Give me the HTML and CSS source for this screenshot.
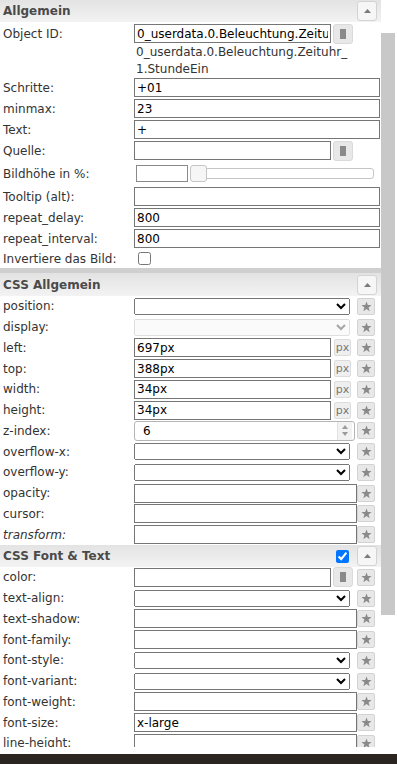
FILE: index.html
```html
<!DOCTYPE html>
<html>
<head>
<meta charset="utf-8">
<link rel="stylesheet" href="styles.css">
</head>
<body>
<div class="screen">
  <div class="viewport">
    <div class="panel">
      <section class="group">
        <div class="ghead"><span class="gtitle">Allgemein</span><button class="collapse"><svg width="7" height="4" viewBox="0 0 7 4"><polygon points="0,4 3.5,0 7,4" fill="#7a7a7a"/></svg></button></div>
        <div class="row first"><span class="lbl">Object ID:</span><div class="val"><input class="txt w197" value="0_userdata.0.Beleuchtung.Zeituhr_1.StundeEin"><button class="browse"><i></i></button></div></div>
        <div class="info">0_userdata.0.Beleuchtung.Zeituhr_<br>1.StundeEin</div>
        <div class="row"><span class="lbl">Schritte:</span><div class="val"><input class="txt" value="+01"></div></div>
        <div class="row"><span class="lbl">minmax:</span><div class="val"><input class="txt" value="23"></div></div>
        <div class="row"><span class="lbl">Text:</span><div class="val"><input class="txt" value="+"></div></div>
        <div class="row"><span class="lbl">Quelle:</span><div class="val"><input class="txt w197" value=""><button class="browse"><i></i></button></div></div>
        <div class="row tall"><span class="lbl">Bildhöhe in %:</span><div class="val"><input class="txt small" value=""><div class="slider"><span class="handle"></span></div></div></div>
        <div class="row"><span class="lbl">Tooltip (alt):</span><div class="val"><input class="txt" value=""></div></div>
        <div class="row"><span class="lbl">repeat_delay:</span><div class="val"><input class="txt" value="800"></div></div>
        <div class="row"><span class="lbl">repeat_interval:</span><div class="val"><input class="txt" value="800"></div></div>
        <div class="row chk"><span class="lbl">Invertiere das Bild:</span><div class="val"><input type="checkbox" class="cb"></div></div>
      </section>
      <div class="band"></div>
      <section class="group css">
        <div class="ghead"><span class="gtitle">CSS Allgemein</span><button class="collapse"><svg width="7" height="4" viewBox="0 0 7 4"><polygon points="0,4 3.5,0 7,4" fill="#7a7a7a"/></svg></button></div>
        <div class="row"><span class="lbl">position:</span><div class="val"><select class="sel"><option></option></select></div><button class="star"><svg width="11" height="11" viewBox="0 0 10 10"><path d="M5 0.4 6.2 3.6 9.6 3.7 6.9 5.9 7.9 9.3 5 7.3 2.1 9.3 3.1 5.9 0.4 3.7 3.8 3.6Z" fill="#8a8a8a"/></svg></button></div>
        <div class="row"><span class="lbl">display:</span><div class="val"><select class="sel" disabled><option></option></select></div><button class="star"><svg width="11" height="11" viewBox="0 0 10 10"><path d="M5 0.4 6.2 3.6 9.6 3.7 6.9 5.9 7.9 9.3 5 7.3 2.1 9.3 3.1 5.9 0.4 3.7 3.8 3.6Z" fill="#8a8a8a"/></svg></button></div>
        <div class="row"><span class="lbl">left:</span><div class="val"><input class="txt w197" value="697px"><span class="px">px</span></div><button class="star"><svg width="11" height="11" viewBox="0 0 10 10"><path d="M5 0.4 6.2 3.6 9.6 3.7 6.9 5.9 7.9 9.3 5 7.3 2.1 9.3 3.1 5.9 0.4 3.7 3.8 3.6Z" fill="#8a8a8a"/></svg></button></div>
        <div class="row"><span class="lbl">top:</span><div class="val"><input class="txt w197" value="388px"><span class="px">px</span></div><button class="star"><svg width="11" height="11" viewBox="0 0 10 10"><path d="M5 0.4 6.2 3.6 9.6 3.7 6.9 5.9 7.9 9.3 5 7.3 2.1 9.3 3.1 5.9 0.4 3.7 3.8 3.6Z" fill="#8a8a8a"/></svg></button></div>
        <div class="row"><span class="lbl">width:</span><div class="val"><input class="txt w197" value="34px"><span class="px">px</span></div><button class="star"><svg width="11" height="11" viewBox="0 0 10 10"><path d="M5 0.4 6.2 3.6 9.6 3.7 6.9 5.9 7.9 9.3 5 7.3 2.1 9.3 3.1 5.9 0.4 3.7 3.8 3.6Z" fill="#8a8a8a"/></svg></button></div>
        <div class="row"><span class="lbl">height:</span><div class="val"><input class="txt w197" value="34px"><span class="px">px</span></div><button class="star"><svg width="11" height="11" viewBox="0 0 10 10"><path d="M5 0.4 6.2 3.6 9.6 3.7 6.9 5.9 7.9 9.3 5 7.3 2.1 9.3 3.1 5.9 0.4 3.7 3.8 3.6Z" fill="#8a8a8a"/></svg></button></div>
        <div class="row"><span class="lbl">z-index:</span><div class="val"><span class="spinner"><input class="spin-in" value="6"><span class="arrows"><svg width="6" height="4" viewBox="0 0 6 4"><polygon points="0,4 3,0 6,4" fill="#9a9a9a"/></svg><svg width="6" height="4" viewBox="0 0 6 4"><polygon points="0,0 3,4 6,0" fill="#9a9a9a"/></svg></span></span></div><button class="star"><svg width="11" height="11" viewBox="0 0 10 10"><path d="M5 0.4 6.2 3.6 9.6 3.7 6.9 5.9 7.9 9.3 5 7.3 2.1 9.3 3.1 5.9 0.4 3.7 3.8 3.6Z" fill="#8a8a8a"/></svg></button></div>
        <div class="row"><span class="lbl">overflow-x:</span><div class="val"><select class="sel"><option></option></select></div><button class="star"><svg width="11" height="11" viewBox="0 0 10 10"><path d="M5 0.4 6.2 3.6 9.6 3.7 6.9 5.9 7.9 9.3 5 7.3 2.1 9.3 3.1 5.9 0.4 3.7 3.8 3.6Z" fill="#8a8a8a"/></svg></button></div>
        <div class="row"><span class="lbl">overflow-y:</span><div class="val"><select class="sel"><option></option></select></div><button class="star"><svg width="11" height="11" viewBox="0 0 10 10"><path d="M5 0.4 6.2 3.6 9.6 3.7 6.9 5.9 7.9 9.3 5 7.3 2.1 9.3 3.1 5.9 0.4 3.7 3.8 3.6Z" fill="#8a8a8a"/></svg></button></div>
        <div class="row"><span class="lbl">opacity:</span><div class="val"><input class="txt" value=""></div><button class="star"><svg width="11" height="11" viewBox="0 0 10 10"><path d="M5 0.4 6.2 3.6 9.6 3.7 6.9 5.9 7.9 9.3 5 7.3 2.1 9.3 3.1 5.9 0.4 3.7 3.8 3.6Z" fill="#8a8a8a"/></svg></button></div>
        <div class="row"><span class="lbl">cursor:</span><div class="val"><input class="txt" value=""></div><button class="star"><svg width="11" height="11" viewBox="0 0 10 10"><path d="M5 0.4 6.2 3.6 9.6 3.7 6.9 5.9 7.9 9.3 5 7.3 2.1 9.3 3.1 5.9 0.4 3.7 3.8 3.6Z" fill="#8a8a8a"/></svg></button></div>
        <div class="row"><span class="lbl it">transform:</span><div class="val"><input class="txt" value=""></div><button class="star"><svg width="11" height="11" viewBox="0 0 10 10"><path d="M5 0.4 6.2 3.6 9.6 3.7 6.9 5.9 7.9 9.3 5 7.3 2.1 9.3 3.1 5.9 0.4 3.7 3.8 3.6Z" fill="#8a8a8a"/></svg></button></div>
      </section>
      <section class="group css">
        <div class="ghead"><span class="gtitle">CSS Font &amp; Text</span><input type="checkbox" class="hcb" checked><button class="collapse"><svg width="7" height="4" viewBox="0 0 7 4"><polygon points="0,4 3.5,0 7,4" fill="#7a7a7a"/></svg></button></div>
        <div class="row"><span class="lbl">color:</span><div class="val"><input class="txt w197" value=""><button class="browse"><i></i></button></div><button class="star"><svg width="11" height="11" viewBox="0 0 10 10"><path d="M5 0.4 6.2 3.6 9.6 3.7 6.9 5.9 7.9 9.3 5 7.3 2.1 9.3 3.1 5.9 0.4 3.7 3.8 3.6Z" fill="#8a8a8a"/></svg></button></div>
        <div class="row"><span class="lbl">text-align:</span><div class="val"><select class="sel"><option></option></select></div><button class="star"><svg width="11" height="11" viewBox="0 0 10 10"><path d="M5 0.4 6.2 3.6 9.6 3.7 6.9 5.9 7.9 9.3 5 7.3 2.1 9.3 3.1 5.9 0.4 3.7 3.8 3.6Z" fill="#8a8a8a"/></svg></button></div>
        <div class="row"><span class="lbl">text-shadow:</span><div class="val"><input class="txt" value=""></div><button class="star"><svg width="11" height="11" viewBox="0 0 10 10"><path d="M5 0.4 6.2 3.6 9.6 3.7 6.9 5.9 7.9 9.3 5 7.3 2.1 9.3 3.1 5.9 0.4 3.7 3.8 3.6Z" fill="#8a8a8a"/></svg></button></div>
        <div class="row"><span class="lbl">font-family:</span><div class="val"><input class="txt" value=""></div><button class="star"><svg width="11" height="11" viewBox="0 0 10 10"><path d="M5 0.4 6.2 3.6 9.6 3.7 6.9 5.9 7.9 9.3 5 7.3 2.1 9.3 3.1 5.9 0.4 3.7 3.8 3.6Z" fill="#8a8a8a"/></svg></button></div>
        <div class="row"><span class="lbl">font-style:</span><div class="val"><select class="sel"><option></option></select></div><button class="star"><svg width="11" height="11" viewBox="0 0 10 10"><path d="M5 0.4 6.2 3.6 9.6 3.7 6.9 5.9 7.9 9.3 5 7.3 2.1 9.3 3.1 5.9 0.4 3.7 3.8 3.6Z" fill="#8a8a8a"/></svg></button></div>
        <div class="row"><span class="lbl">font-variant:</span><div class="val"><select class="sel"><option></option></select></div><button class="star"><svg width="11" height="11" viewBox="0 0 10 10"><path d="M5 0.4 6.2 3.6 9.6 3.7 6.9 5.9 7.9 9.3 5 7.3 2.1 9.3 3.1 5.9 0.4 3.7 3.8 3.6Z" fill="#8a8a8a"/></svg></button></div>
        <div class="row"><span class="lbl">font-weight:</span><div class="val"><input class="txt" value=""></div><button class="star"><svg width="11" height="11" viewBox="0 0 10 10"><path d="M5 0.4 6.2 3.6 9.6 3.7 6.9 5.9 7.9 9.3 5 7.3 2.1 9.3 3.1 5.9 0.4 3.7 3.8 3.6Z" fill="#8a8a8a"/></svg></button></div>
        <div class="row"><span class="lbl">font-size:</span><div class="val"><input class="txt" value="x-large"></div><button class="star"><svg width="11" height="11" viewBox="0 0 10 10"><path d="M5 0.4 6.2 3.6 9.6 3.7 6.9 5.9 7.9 9.3 5 7.3 2.1 9.3 3.1 5.9 0.4 3.7 3.8 3.6Z" fill="#8a8a8a"/></svg></button></div>
        <div class="row"><span class="lbl">line-height:</span><div class="val"><input class="txt" value=""></div><button class="star"><svg width="11" height="11" viewBox="0 0 10 10"><path d="M5 0.4 6.2 3.6 9.6 3.7 6.9 5.9 7.9 9.3 5 7.3 2.1 9.3 3.1 5.9 0.4 3.7 3.8 3.6Z" fill="#8a8a8a"/></svg></button></div>
      </section>
    </div>
    <div class="scrollbar"><div class="thumb"></div></div>
  </div>
  <div class="taskbar"></div>
</div>
</body>
</html>
```
FILE: styles.css
```css
* { box-sizing: border-box; }
body {
  margin: 0;
  font-family: "DejaVu Sans", Verdana, sans-serif;
  font-size: 12px;
  color: #333;
  background: #fff;
}
.screen {
  width: 397px;
  height: 764px;
  display: flex;
  flex-direction: column;
  overflow: hidden;
}
.viewport {
  height: 754px;
  display: flex;
}
.panel {
  width: 381px;
  height: 747px;
  overflow: hidden;
}
.scrollbar { width: 14px; }
.thumb {
  margin-top: 33px;
  height: 582px;
  background: #c8c8c8;
}
.taskbar {
  height: 10px;
  background: #2b2521;
}

.ghead {
  height: 22px;
  display: flex;
  align-items: center;
  padding: 0 4px 0 3px;
  background: linear-gradient(#e3e3e3, #f3f3f3);
  font-weight: bold;
  color: #4a4a4a;
}
.gtitle { flex: 1; }
.collapse {
  width: 20px;
  height: 20px;
  border: 1px solid #d3d3d3;
  border-radius: 3px;
  background: #f6f6f6;
  padding: 0;
  display: flex;
  align-items: center;
  justify-content: center;
}
.hcb {
  width: 13px;
  height: 13px;
  margin: 0 8px 0 0;
}
.band {
  height: 6px;
  background: #cfcfcf;
  border-bottom: 1px solid #e2e2e2;
}

.row {
  display: grid;
  grid-template-columns: 131px 246px;
  align-items: center;
  height: 21px;
  padding-left: 3px;
}
.row.first { margin-top: 1px; }
.row.tall { height: 25px; }
.row.chk { height: 19px; }
.css .row {
  grid-template-columns: 131px 223px 18px;
  height: 20.75px;
}
.lbl { white-space: nowrap; }
.lbl.it { font-style: italic; }
.val {
  display: flex;
  align-items: center;
}
.info {
  height: 33px;
  padding-left: 136px;
  line-height: 17px;
  white-space: nowrap;
}

.txt {
  width: 100%;
  height: 19px;
  border: 1px solid #767676;
  border-radius: 0;
  padding: 0 2px;
  font: 12px "DejaVu Sans", Verdana, sans-serif;
  color: #000;
  background: #fff;
  outline: none;
}
.txt.w197 { width: 197px; }
.txt.small {
  width: 52px;
  height: 17px;
  margin-left: 2px;
  border-color: #8a8a8a;
}
.browse {
  width: 20px;
  height: 20px;
  margin-left: 2px;
  border: 1px solid #dadada;
  border-radius: 3px;
  background: #e8e8e8;
  padding: 0;
  display: flex;
  align-items: center;
  justify-content: center;
}
.browse i {
  display: block;
  width: 6px;
  height: 10px;
  background: #8a8a8a;
}
.slider {
  position: relative;
  flex: 1;
  height: 11px;
  margin: 0 6px 0 10px;
  border: 1px solid #c5c5c5;
  border-radius: 3px;
  background: #fff;
}
.handle {
  position: absolute;
  left: -9px;
  top: -4px;
  width: 17px;
  height: 17px;
  border: 1px solid #c5c5c5;
  border-radius: 3px;
  background: #f6f6f6;
}
.cb {
  width: 13px;
  height: 13px;
  margin: 0 0 0 4px;
}
.sel {
  width: 216px;
  height: 17px;
  font: 12px "DejaVu Sans", Verdana, sans-serif;
}
.px {
  width: 17px;
  height: 17px;
  margin-left: 3px;
  border: 1px solid #dcdcdc;
  border-radius: 2px;
  background: #efefef;
  font-size: 11px;
  color: #777;
  display: flex;
  align-items: center;
  justify-content: center;
}
.star {
  width: 18px;
  height: 17px;
  border: 1px solid #d3d3d3;
  border-radius: 2px;
  background: #e8e8e8;
  padding: 0;
  display: flex;
  align-items: center;
  justify-content: center;
}
.spinner {
  width: 221px;
  height: 20px;
  display: flex;
  align-items: stretch;
  border: 1px solid #b5b5b5;
  border-radius: 3px;
  background: #fff;
  overflow: hidden;
}
.spin-in {
  flex: 1;
  min-width: 0;
  border: 0;
  padding: 0 0 0 8px;
  font: 12px "DejaVu Sans", Verdana, sans-serif;
  color: #000;
  outline: none;
  background: transparent;
}
.arrows {
  width: 15px;
  margin-right: 2px;
  display: flex;
  flex-direction: column;
  align-items: center;
  justify-content: center;
  gap: 3px;
  background: #f2f2f2;
  border-left: 1px solid #e3e3e3;
}
.arrows svg { display: block; }
```
